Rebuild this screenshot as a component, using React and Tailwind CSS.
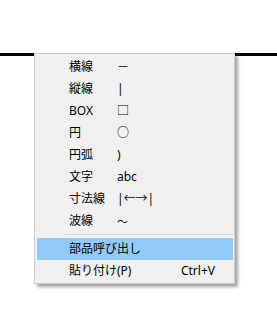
import React from "react";

const items = [
  ["横線", "－"],
  ["縦線", "|"],
  ["BOX", "□"],
  ["円", "○"],
  ["円弧", ")"],
  ["文字", "abc"],
  ["寸法線", "|←→|"],
  ["波線", "〜"],
];

export default function App() {
  return (
    <div
      className="relative w-[277px] h-[330px] bg-white overflow-hidden text-[12px] text-black"
      style={{ fontFamily: '"Noto Sans", "Noto Sans CJK JP", sans-serif' }}
    >
      <div className="pt-[53px]">
        <div className="h-[3px] bg-black" />
      </div>
      <div className="absolute left-[34px] top-[53px] w-[201px] border border-[#cccccc] bg-[#f0f0f0] pt-[2px] pb-[1px] pl-[2px] pr-[1px] shadow-[3px_3px_3px_rgba(0,0,0,0.35)]">
        {items.map(([a, b]) => (
          <div key={a} className="flex h-[22px] items-center pl-[32px] leading-none">
            <span className="w-[48px]">{a}</span>
            <span className={b === "〜" ? "text-[11px]" : ""}>{b}</span>
          </div>
        ))}
        <div className="mt-[2px] mb-[3px] ml-[28px] h-px bg-[#d7d7d7]" />
        <div className="flex h-[22px] items-center bg-[#91c9f7] pl-[32px] leading-none">
          <span>部品呼び出し</span>
        </div>
        <div className="flex h-[22px] items-center justify-between pl-[32px] pr-[18px] leading-none">
          <span>貼り付け(P)</span>
          <span>Ctrl+V</span>
        </div>
      </div>
    </div>
  );
}
